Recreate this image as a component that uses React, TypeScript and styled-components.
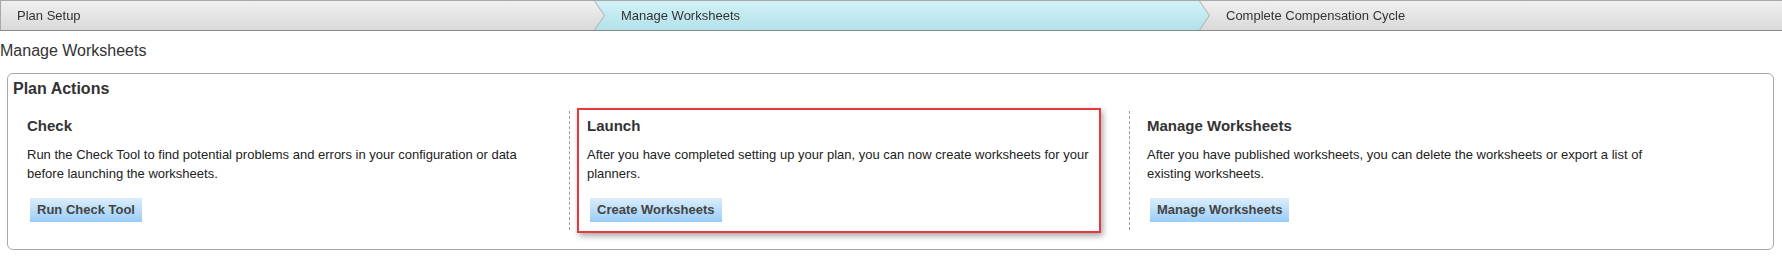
import styled, { createGlobalStyle } from 'styled-components';

const GlobalStyle = createGlobalStyle`
    body {
        margin: 0;
        background: #fff;
        font-family: "Liberation Sans", Arial, sans-serif;
        color: #333;
    }
`;

type Step = { label: string; width?: number; active?: boolean };

const steps: Step[] = [
    { label: 'Plan Setup', width: 603 },
    { label: 'Manage Worksheets', width: 615, active: true },
    { label: 'Complete Compensation Cycle' },
];

type Action = { title: string; text: string; button: string; highlighted?: boolean };

const actions: Action[] = [
    {
        title: 'Check',
        text: 'Run the Check Tool to find potential problems and errors in your configuration or data before launching the worksheets.',
        button: 'Run Check Tool',
    },
    {
        title: 'Launch',
        text: 'After you have completed setting up your plan, you can now create worksheets for your planners.',
        button: 'Create Worksheets',
        highlighted: true,
    },
    {
        title: 'Manage Worksheets',
        text: 'After you have published worksheets, you can delete the worksheets or export a list of existing worksheets.',
        button: 'Manage Worksheets',
    },
];

const App = () => {
    return (
        <>
            <GlobalStyle />
            <StepBar>
                {steps.map((step, i) => (
                    <StepWrap
                        key={step.label}
                        $width={step.width}
                        $first={i === 0}
                        $z={steps.length - i}
                    >
                        <StepItem $active={step.active} $arrow={i < steps.length - 1} $first={i === 0}>
                            {step.label}
                        </StepItem>
                    </StepWrap>
                ))}
            </StepBar>

            <PageTitle>Manage Worksheets</PageTitle>

            <Panel>
                <PanelTitle>Plan Actions</PanelTitle>
                <ActionGrid>
                    {actions.map((action, i) => (
                        <Column key={action.title} $first={i === 0}>
                            <Section $highlighted={action.highlighted}>
                                <SectionTitle>{action.title}</SectionTitle>
                                <SectionText>{action.text}</SectionText>
                                <ActionButton type="button">{action.button}</ActionButton>
                            </Section>
                        </Column>
                    ))}
                </ActionGrid>
            </Panel>
        </>
    );
};

export default App;

// progress bar
const StepBar = styled.div`
    display: flex;
    height: 29px;
    border-top: 1px solid #a8a8a8;
    border-bottom: 1px solid #8a8a8a;
    border-left: 1px solid #a8a8a8;
    background: linear-gradient(#f0f0f0, #d9d9d9);
`;

const StepWrap = styled.div<{ $width?: number; $first?: boolean; $z: number }>`
    position: relative;
    z-index: ${(p) => p.$z};
    flex: ${(p) => (p.$width ? `0 0 ${p.$width}px` : '1 1 auto')};
    margin-left: ${(p) => (p.$first ? 0 : -10)}px;
    filter: drop-shadow(1px 0 0 #adadad);
`;

const StepItem = styled.div<{ $active?: boolean; $arrow?: boolean; $first?: boolean }>`
    height: 29px;
    line-height: 29px;
    padding-left: ${(p) => (p.$first ? 16 : 27)}px;
    font-size: 13px;
    color: #333;
    white-space: nowrap;
    background: ${(p) =>
        p.$active
            ? 'linear-gradient(#d2f1f7, #b3e2ea)'
            : 'linear-gradient(#f0f0f0, #d9d9d9)'};
    clip-path: ${(p) =>
        p.$arrow
            ? 'polygon(0 0, calc(100% - 10px) 0, 100% 50%, calc(100% - 10px) 100%, 0 100%)'
            : 'none'};
`;

const PageTitle = styled.h1`
    margin: 11px 0 13px;
    font-size: 16px;
    line-height: 18px;
    font-weight: normal;
    color: #333;
`;

const Panel = styled.div`
    margin: 0 8px 0 7px;
    padding: 6px 0 19px;
    border: 1px solid #a9a9a9;
    border-radius: 6px;
`;

const PanelTitle = styled.h2`
    margin: 0 0 13px;
    padding-left: 5px;
    font-size: 16px;
    line-height: 18px;
    font-weight: bold;
    color: #333;
`;

const ActionGrid = styled.div`
    display: grid;
    grid-template-columns: 561px 560px 560px;
`;

const Column = styled.div<{ $first?: boolean }>`
    padding: 0 28px 0 ${(p) => (p.$first ? 9 : 7)}px;
    border-left: ${(p) => (p.$first ? 'none' : '1px dashed #9c9c9c')};
`;

const Section = styled.div<{ $highlighted?: boolean }>`
    margin: -3px 0;
    padding: 7px 4px 9px 8px;
    border: 2px solid ${(p) => (p.$highlighted ? '#e8383f' : 'transparent')};
    box-shadow: ${(p) => (p.$highlighted ? '2px 3px 6px rgba(0, 0, 0, 0.35)' : 'none')};
`;

const SectionTitle = styled.h3`
    margin: 0;
    font-size: 15px;
    line-height: 17px;
    font-weight: bold;
    color: #333;
`;

const SectionText = styled.p`
    margin: 11px 0 0;
    font-size: 13px;
    line-height: 19px;
    color: #222;
`;

const ActionButton = styled.button`
    display: block;
    margin: 15px 0 0 3px;
    height: 24px;
    padding: 0 7px;
    border: none;
    border-radius: 0;
    background: linear-gradient(#dcedfb, #98cdf8);
    font-family: "Liberation Sans", Arial, sans-serif;
    font-size: 13px;
    font-weight: bold;
    line-height: 24px;
    color: #444;
    cursor: pointer;
`;
